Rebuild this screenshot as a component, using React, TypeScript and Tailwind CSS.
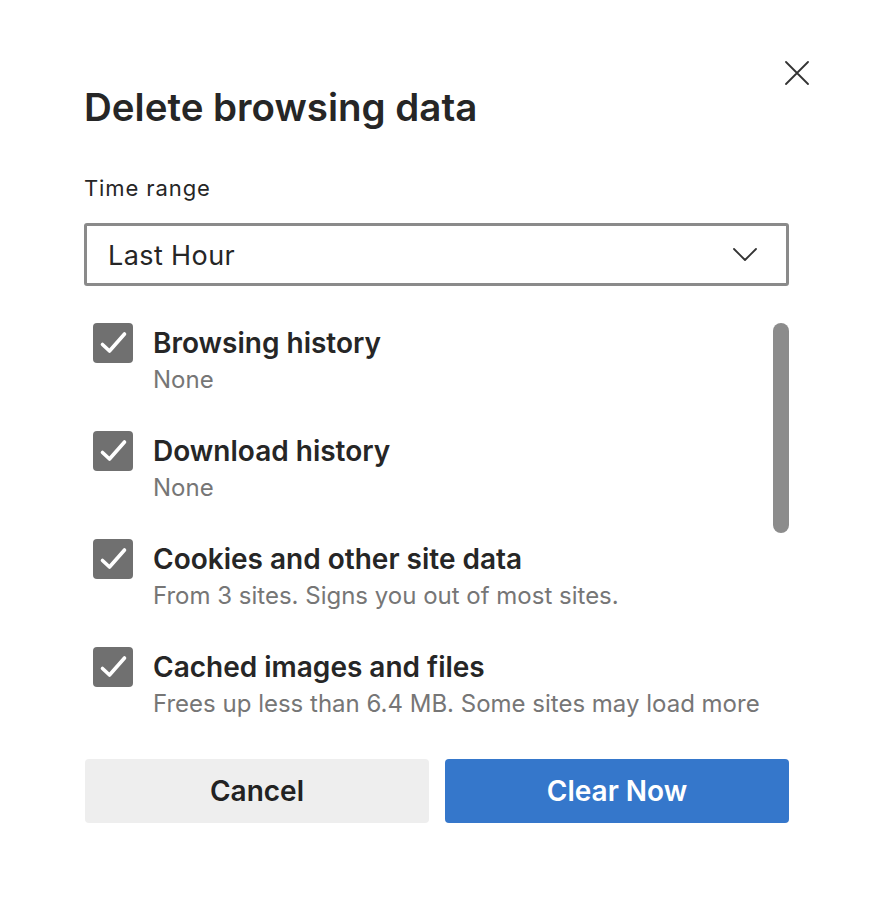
const items = [
  { title: "Browsing history", sub: "None" },
  { title: "Download history", sub: "None" },
  { title: "Cookies and other site data", sub: "From 3 sites. Signs you out of most sites." },
  { title: "Cached images and files", sub: "Frees up less than 6.4 MB. Some sites may load more" },
];

const CheckBox = () => (
  <svg width="40" height="40" viewBox="0 0 40 40" className="shrink-0">
    <rect x="0" y="0" width="40" height="40" rx="4" fill="#707070" />
    <path d="M9.5 21.5 L16.5 28 L31.5 11" fill="none" stroke="#fff" strokeWidth="3.6" strokeLinecap="round" strokeLinejoin="round" />
  </svg>
);

const App = () => {
  return (
    <div className="relative w-[873px] h-[909px] bg-white text-[#262626] font-['Inter',sans-serif]">
      {/* Close */}
      <button className="absolute left-[785px] top-[61px] w-[24px] h-[24px]">
        <svg width="24" height="24" viewBox="0 0 24 24">
          <path d="M1 1 L23 23 M23 1 L1 23" stroke="#333" strokeWidth="1.8" strokeLinecap="round" />
        </svg>
      </button>

      <div className="px-[84px] pt-[84px]">
        <h1 className="text-[38.5px] leading-[46px] font-semibold">Delete browsing data</h1>

        <div className="mt-[44px] text-[22px] leading-[28px] tracking-[0.9px]">Time range</div>

        <div className="mt-[21px] h-[63px] border-[3px] border-[#8a8a8a] rounded-[3px] flex items-center justify-between pl-[21px] pr-[29px]">
          <span className="text-[27px] tracking-[0.4px] pt-[4px]">Last Hour</span>
          <svg width="24" height="13" viewBox="0 0 24 13">
            <path d="M1 1 L12 12 L23 1" fill="none" stroke="#333" strokeWidth="1.8" strokeLinecap="round" strokeLinejoin="round" />
          </svg>
        </div>

        {/* Options list */}
        <div className="mt-[37px] flex">
          <div className="flex-1 flex flex-col gap-[36px] pl-[9px]">
            {items.map((it) => (
              <div key={it.title} className="flex items-start gap-[20px]">
                <CheckBox />
                <div className="mt-[3px]">
                  <div className="text-[28px] leading-[34px] font-semibold">{it.title}</div>
                  <div className="mt-[5px] text-[24px] leading-[30px] text-[#767676] whitespace-nowrap">{it.sub}</div>
                </div>
              </div>
            ))}
          </div>
          <div className="w-[16px] h-[210px] rounded-full bg-[#8c8c8c] shrink-0" />
        </div>

        {/* Actions */}
        <div className="mt-[40px] grid grid-cols-2 gap-[16px] pl-[1px]">
          <button className="h-[64px] rounded-[4px] bg-[#eeeeee] text-[28px] font-semibold text-[#222]">Cancel</button>
          <button className="h-[64px] rounded-[4px] bg-[#3577cb] text-[28px] font-semibold text-white">Clear Now</button>
        </div>
      </div>
    </div>
  );
};

export default App;
